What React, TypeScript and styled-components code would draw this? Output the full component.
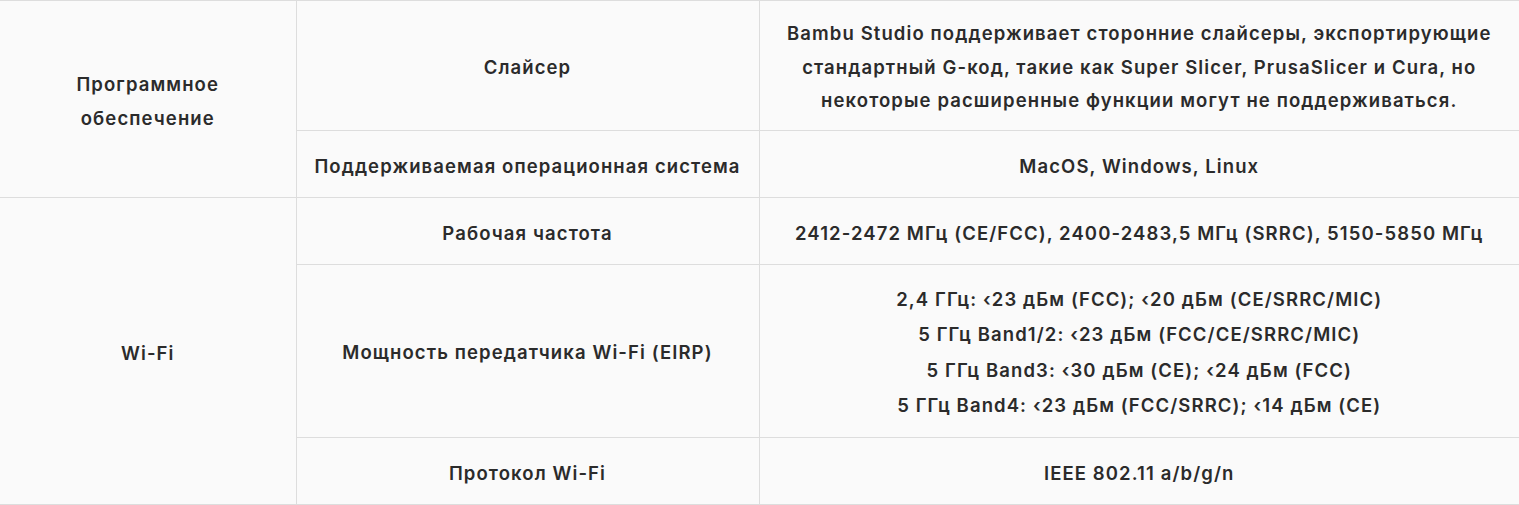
import React from "react";
import styled, { createGlobalStyle } from "styled-components";

const Global = createGlobalStyle`
  html, body { margin: 0; padding: 0; background: #fafafa; }
  body { font-family: Inter, "Noto Sans", "Liberation Sans", sans-serif; color: #2b2b2b; }
`;

const Table = styled.table`
  width: 1519px;
  border-collapse: collapse;
  table-layout: fixed;
  background: #fafafa;
`;

const Cell = styled.td<{ $lh?: number; $pad?: number }>`
  border: 1px solid #dddddd;
  text-align: center;
  vertical-align: middle;
  font-size: 18.5px;
  font-weight: 600;
  letter-spacing: 1.1px;
  line-height: ${(p) => p.$lh ?? 34}px;
  padding: ${(p) => (p.$pad ?? 16) + 2}px 16px ${(p) => (p.$pad ?? 16) - 2}px;
  color: #2b2b2b;
  &:first-child { border-left: none; }
  &:last-child { border-right: none; }
`;

const Row = styled.tr`
  &:first-child td { border-top: 1px solid #dddddd; }
`;

export default function App() {
  return (
    <>
      <Global />
      <Table>
        <colgroup>
          <col style={{ width: 296 }} />
          <col style={{ width: 463 }} />
          <col />
        </colgroup>
        <tbody>
          <Row>
            <Cell rowSpan={2}>Программное<br />обеспечение</Cell>
            <Cell $lh={33.5} $pad={14}>Слайсер</Cell>
            <Cell $lh={33.5} $pad={14}>
              Bambu Studio поддерживает сторонние слайсеры, экспортирующие стандартный G-код, такие как Super Slicer, PrusaSlicer и Cura, но некоторые расширенные функции могут не поддерживаться.
            </Cell>
          </Row>
          <Row>
            <Cell>Поддерживаемая операционная система</Cell>
            <Cell>MacOS, Windows, Linux</Cell>
          </Row>
          <Row>
            <Cell rowSpan={3}>Wi-Fi</Cell>
            <Cell>Рабочая частота</Cell>
            <Cell>2412-2472 МГц (CE/FCC), 2400-2483,5 МГц (SRRC), 5150-5850 МГц</Cell>
          </Row>
          <Row>
            <Cell $lh={35.5} $pad={15}>Мощность передатчика Wi-Fi (EIRP)</Cell>
            <Cell $lh={35.5} $pad={15}>
              2,4 ГГц: ‹23 дБм (FCC); ‹20 дБм (CE/SRRC/MIC)<br />
              5 ГГц Band1/2: ‹23 дБм (FCC/CE/SRRC/MIC)<br />
              5 ГГц Band3: ‹30 дБм (CE); ‹24 дБм (FCC)<br />
              5 ГГц Band4: ‹23 дБм (FCC/SRRC); ‹14 дБм (CE)
            </Cell>
          </Row>
          <Row>
            <Cell>Протокол Wi-Fi</Cell>
            <Cell>IEEE 802.11 a/b/g/n</Cell>
          </Row>
        </tbody>
      </Table>
    </>
  );
}
